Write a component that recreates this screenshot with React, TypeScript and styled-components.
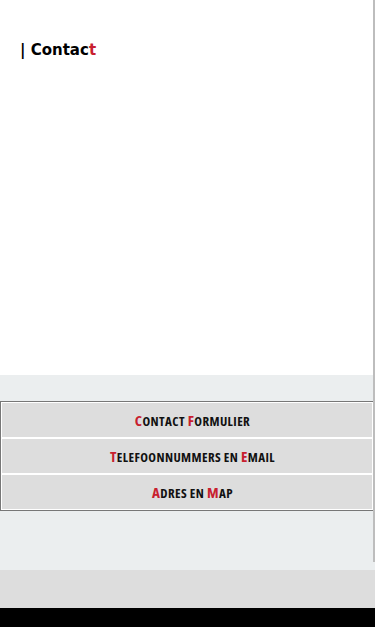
import React from "react";
import styled, { createGlobalStyle } from "styled-components";

const GlobalStyle = createGlobalStyle`
    html, body {
        margin: 0;
        padding: 0;
        background: #000;
    }
`

const Page = styled.div`
    width: 375px;
    display: flex;
    flex-direction: column;
    position: relative;
`
const Intro = styled.section`
    height: 375px;
    background: #fff;
    padding: 40px 20px 0;
    box-sizing: border-box;
`
const Heading = styled.h1`
    margin: 0;
    font-family: "DejaVu Sans", sans-serif;
    font-size: 15px;
    font-weight: bold;
    line-height: 20px;
    color: #000;
`
const Accent = styled.span`
    color: #c8202f;
`
const MenuSection = styled.section`
    height: 195px;
    background: #ebeeef;
    padding-top: 26px;
    box-sizing: border-box;
`
const Menu = styled.nav`
    width: 374px;
    border: 1px solid #777;
    box-sizing: border-box;
    display: flex;
    flex-direction: column;
`
const MenuItem = styled.a`
    height: 36px;
    border: 1px solid #fff;
    box-sizing: border-box;
    padding-left: 11px;
    background: #dddddd;
    display: flex;
    align-items: center;
    justify-content: center;
    text-decoration: none;
`
const Label = styled.span`
    font-family: "Open Sans", "DejaVu Sans Condensed", sans-serif;
    font-stretch: 75%;
    font-weight: 700;
    font-size: 13px;
    letter-spacing: 0.4px;
    line-height: 16px;
    text-transform: uppercase;
    color: #111;
    white-space: pre;
`
const Initial = styled.span`
    color: #c8202f;
    font-size: 15px;
`

const Footer = styled.footer`
    height: 38px;
    background: #dddddd;
`
const FooterBar = styled.div`
    height: 19px;
    background: #000;
`
const ScrollLine = styled.div`
    position: absolute;
    top: 0;
    right: 0;
    width: 2px;
    height: 562px;
    background: #bdbdbd;
`

const items: [string, string, string, string][] = [
    ["C", "ontact ", "F", "ormulier"],
    ["T", "elefoonnummers en ", "E", "mail"],
    ["A", "dres en ", "M", "ap"],
]

export default function App() {
    return (
        <Page>
            <GlobalStyle />
            <Intro>
                <Heading>| Contac<Accent>t</Accent></Heading>
            </Intro>
            <MenuSection>
                <Menu>
                    {items.map(([a, b, c, d]) => (
                        <MenuItem key={a} href="#">
                            <Label>
                                <Initial>{a}</Initial>{b}<Initial>{c}</Initial>{d}
                            </Label>
                        </MenuItem>
                    ))}
                </Menu>
            </MenuSection>
            <Footer />
            <FooterBar />
            <ScrollLine />
        </Page>
    );
}
